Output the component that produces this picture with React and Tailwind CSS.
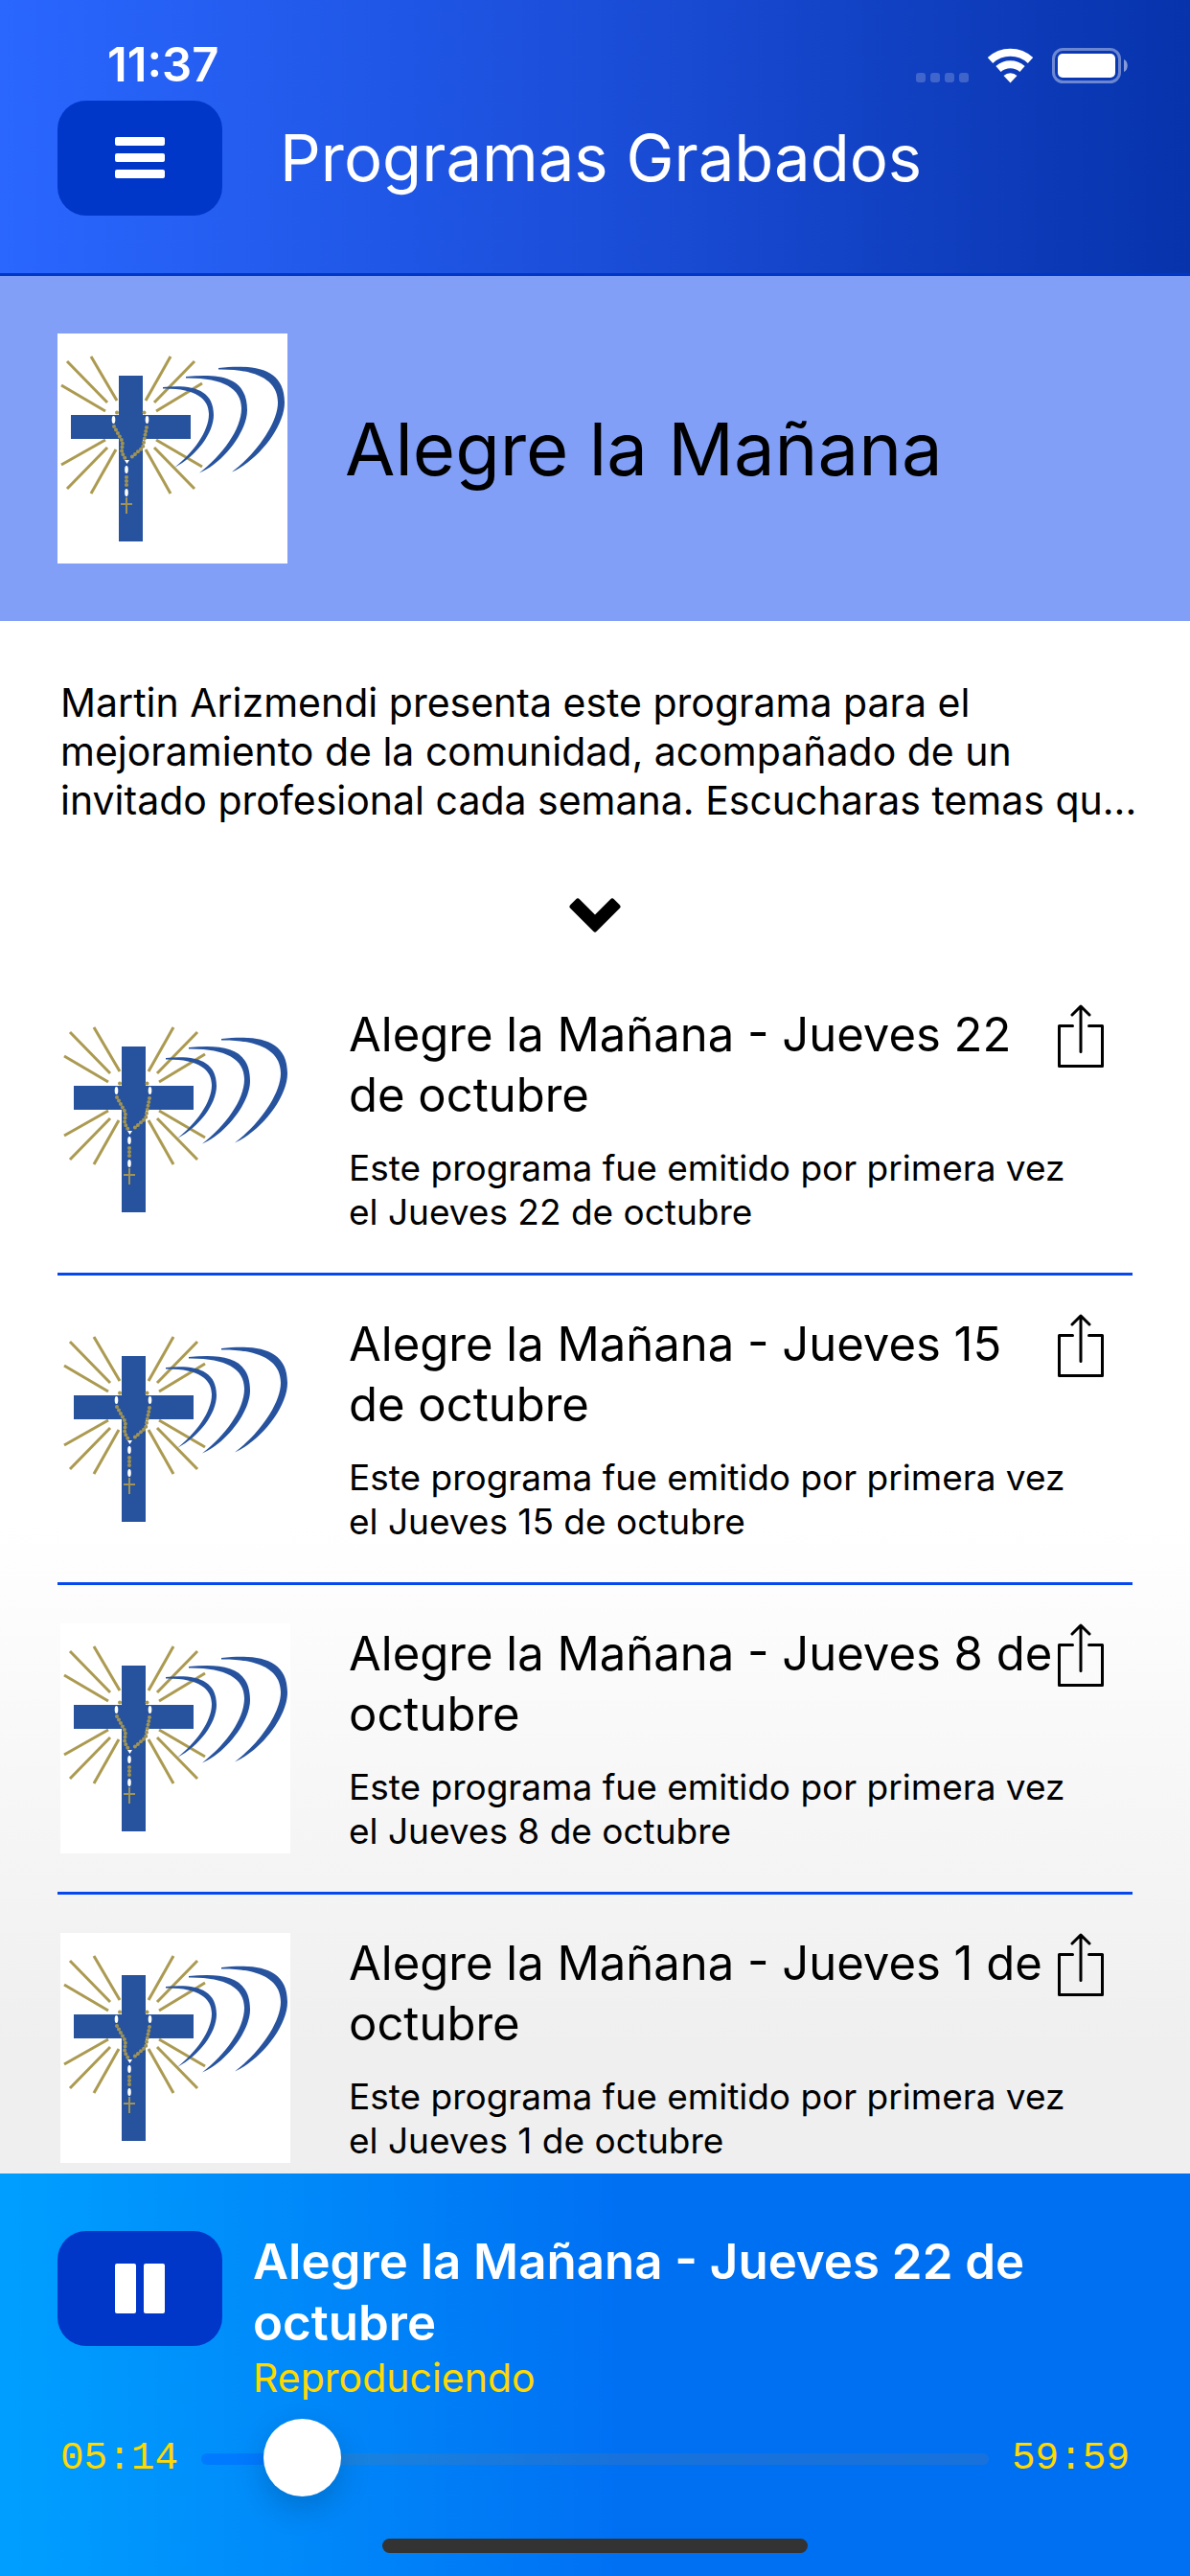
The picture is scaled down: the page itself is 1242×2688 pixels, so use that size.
import React, { useState } from 'react';

const episodes = [
  { id: 1, day: 'Jueves 22 de octubre' },
  { id: 2, day: 'Jueves 15 de octubre' },
  { id: 3, day: 'Jueves 8 de octubre' },
  { id: 4, day: 'Jueves 1 de octubre' },
];

const description =
  'Martin Arizmendi presenta este programa para el mejoramiento de la comunidad, acompañado de un invitado profesional cada semana. Escucharas temas que ayudan a la familia.';
const PREVIEW_LENGTH = 148;
const DURATION = 3599;

// Gold rays around the cross, [x1, y1, x2, y2]
const rays = [
  [35, 24, 62, 70],
  [10, 29, 52, 72],
  [4, 54, 50, 81],
  [118, 24, 92, 70],
  [143, 29, 101, 72],
  [151, 52, 103, 81],
  [50, 111, 4, 137],
  [52, 119, 10, 162],
  [61, 121, 35, 167],
  [103, 111, 151, 139],
  [101, 119, 143, 162],
  [92, 121, 118, 167],
];

function formatTime(seconds) {
  const m = String(Math.floor(seconds / 60)).padStart(2, '0');
  const s = String(seconds % 60).padStart(2, '0');
  return `${m}:${s}`;
}

function ProgramLogo() {
  return (
    <svg viewBox="0 0 240 240" className="size-60 shrink-0 bg-white" role="img" aria-label="Alegre la Mañana">
      <g stroke="#ab9a50" strokeWidth="3">
        {rays.map(([x1, y1, x2, y2]) => (
          <line key={`${x1}-${y1}`} x1={x1} y1={y1} x2={x2} y2={y2} />
        ))}
      </g>
      <path d="M64 44h25v41h50v25H89v107H64V110H14V85h50z" fill="#27539e" />
      <g fill="#27539e">
        <path d="M110 56C140 53 163 58 163 85C163 104 145 128 122 140C142 124 158 102 158 84C158 68 144 57 110 57.500Z" />
        <path d="M134 45C168 42 198 44 198 80C198 103 172 136 148 145.500C172 127 192 100 192 78C192 57 172 46 134 46.500Z" />
        <path d="M168 36C205 32 237 36 237 72C237 97 210 132 182 144.500C208 125 230 93 230 72C230 49 208 37 168 37.500Z" />
      </g>
      <g fill="none" stroke="#a09355" strokeWidth="4" strokeLinecap="round" strokeDasharray="0 4">
        <path d="M59 97L68 113L67 124L71 131" />
        <path d="M93 98L89 119L75 131" />
        <path d="M72 150V160" />
      </g>
      <g fill="#ab9a50">
        <circle cx="62" cy="82.500" r="2" />
        <circle cx="90.500" cy="82.500" r="2" />
      </g>
      <g fill="#fff">
        <ellipse cx="58.500" cy="90" rx="1.800" ry="4" />
        <ellipse cx="93.500" cy="90" rx="1.800" ry="4" />
        <path d="M70 132h5l-2.500 4z" />
        <ellipse cx="72" cy="142" rx="1.800" ry="4" />
        <ellipse cx="72" cy="166" rx="1.800" ry="4" />
      </g>
      <path d="M72 171v17M66 178h12" stroke="#a09355" strokeWidth="2" />
    </svg>
  );
}

function StatusBar() {
  return (
    <div className="flex items-end justify-between pl-28 pr-16 pt-10 text-white">
      <span className="text-[49px] leading-14 font-semibold">11:37</span>
      <svg viewBox="0 0 222 38" className="mb-2 h-[38px] w-[222px]" fill="#fff" aria-hidden="true">
        <g opacity="0.2">
          <rect x="0" y="26" width="10" height="10" rx="3" />
          <rect x="15" y="26" width="10" height="10" rx="3" />
          <rect x="30" y="26" width="10" height="10" rx="3" />
          <rect x="45" y="26" width="10" height="10" rx="3" />
        </g>
        <g fill="none" stroke="#fff" strokeWidth="8">
          <path d="M77.500 13a31 31 0 0 1 42 0" />
          <path d="M86 22a19 19 0 0 1 25 0" />
        </g>
        <path d="M98.500 36.500l-7-7.500a10.500 10.500 0 0 1 14 0z" />
        <rect x="143.500" y="1.500" width="69" height="34" rx="10" fill="none" stroke="#fff" strokeWidth="3" opacity="0.4" />
        <rect x="148" y="6" width="60" height="25" rx="5" />
        <path d="M217 12c5 2 5 11 0 13z" opacity="0.5" />
      </svg>
    </div>
  );
}

function ShareIcon() {
  return (
    <svg viewBox="0 0 48 66" className="h-[66px] w-12" fill="none" stroke="#000" strokeWidth="3" strokeLinecap="round" strokeLinejoin="round" aria-hidden="true">
      <path d="M15.500 22.500H1.500v42h45v-42h-14M24 49.500V2M15 11l9-9 9 9" />
    </svg>
  );
}

function Episode({ day }) {
  return (
    <li className="flex gap-[61px] border-b-3 border-[#0747ee] py-10 pl-[3px]">
      <ProgramLogo />
      <div className="min-w-0 flex-1">
        <div className="flex items-start">
          <h3 className="min-w-0 flex-1 text-[49px] leading-[63px]">{`Alegre la Mañana - ${day}`}</h3>
          <button type="button" aria-label="Compartir" className="mr-[30px] shrink-0">
            <ShareIcon />
          </button>
        </div>
        <p className="pt-[22px] pr-12 text-[37px] leading-[46px]">
          {`Este programa fue emitido por primera vez el ${day}`}
        </p>
      </div>
    </li>
  );
}

function Player() {
  const [playing, setPlaying] = useState(true);
  const [position, setPosition] = useState(314);

  return (
    <footer className="shrink-0 bg-linear-to-r from-[#009fff] to-[#0070f3] to-52% px-15 pt-15 pb-6">
      <div className="flex items-start gap-8">
        <button
          type="button"
          aria-label={playing ? 'Pausar' : 'Reproducir'}
          onClick={() => setPlaying(!playing)}
          className="flex h-30 w-43 shrink-0 items-center justify-center rounded-[30px] bg-[#0037c9]"
        >
          <svg viewBox="0 0 52 52" className="size-13" fill="#fff" aria-hidden="true">
            {playing ? (
              <>
                <rect width="22" height="52" rx="2" />
                <rect x="30" width="22" height="52" rx="2" />
              </>
            ) : (
              <path d="M4 0l46 26L4 52z" />
            )}
          </svg>
        </button>
        <div className="min-w-0 flex-1">
          <h2 className="text-[51px] leading-16 font-semibold text-white">Alegre la Mañana - Jueves 22 de octubre</h2>
          <p className="text-[41px] leading-[50px] text-[#ffd900]">{playing ? 'Reproduciendo' : 'En pausa'}</p>
        </div>
      </div>
      <div className="flex h-[119px] items-center gap-6 px-[3px] font-['Liberation_Mono',monospace] text-[41px] text-[#ffd900]">
        <span>{formatTime(position)}</span>
        <input
          type="range"
          aria-label="Posición"
          min="0"
          max={DURATION}
          value={position}
          onChange={(e) => setPosition(Number(e.target.value))}
          style={{ '--fill': `${(position / DURATION) * 100}%` }}
          className="h-21 min-w-0 flex-1 appearance-none bg-transparent [&::-webkit-slider-runnable-track]:h-3 [&::-webkit-slider-runnable-track]:rounded-full [&::-webkit-slider-runnable-track]:bg-[linear-gradient(to_right,#007aff_var(--fill),#78788033_var(--fill))] [&::-webkit-slider-thumb]:-mt-9 [&::-webkit-slider-thumb]:size-[81px] [&::-webkit-slider-thumb]:appearance-none [&::-webkit-slider-thumb]:rounded-full [&::-webkit-slider-thumb]:bg-white [&::-webkit-slider-thumb]:shadow-[0_12px_32px_rgba(0,0,0,0.18)]"
        />
        <span>{formatTime(DURATION)}</span>
      </div>
      <div className="mx-auto mt-6 h-[15px] w-111 rounded-full bg-[#333]" />
    </footer>
  );
}

export default function App() {
  const [expanded, setExpanded] = useState(false);
  const preview = `${description.slice(0, PREVIEW_LENGTH)}...`;

  return (
    <div className="flex h-screen flex-col overflow-hidden bg-white font-['Inter',sans-serif] text-black">
      <header className="shrink-0 border-b-3 border-[#0037c9] bg-linear-to-r from-[#2a67ff] via-[#1b4ed9] to-[#0733ac] pb-15">
        <StatusBar />
        <div className="flex items-center gap-15 px-15 pt-[9px]">
          <button
            type="button"
            aria-label="Menú"
            className="flex h-30 w-43 shrink-0 items-center justify-center rounded-[30px] bg-[#0037c9]"
          >
            <svg viewBox="0 0 52 44" className="h-11 w-13" fill="#fff" aria-hidden="true">
              <rect width="52" height="9" rx="2" />
              <rect y="17" width="52" height="9" rx="2" />
              <rect y="34" width="52" height="9" rx="2" />
            </svg>
          </button>
          <h1 className="text-[67px] leading-20 text-white">Programas Grabados</h1>
        </div>
      </header>

      <section className="flex shrink-0 items-center gap-15 bg-[#819ff7] p-15">
        <ProgramLogo />
        <h2 className="text-[76px] leading-24">Alegre la Mañana</h2>
      </section>

      <main className="min-h-0 flex-1 overflow-hidden bg-linear-to-b from-white from-58% to-[#efefef] to-92% px-15 pt-15">
        <p className="-mr-3 pl-[3px] text-[41px] leading-[51px]">{expanded ? description : preview}</p>
        <button
          type="button"
          aria-label="Ver más"
          onClick={() => setExpanded(!expanded)}
          className="mx-auto flex h-[147px] w-40 items-center justify-center pt-10"
        >
          <svg viewBox="0 0 54 36" className="h-9 w-[54px]" aria-hidden="true">
            <path d="M3 9l6-6 18 18 18-18 6 6-24 24z" stroke="#000" strokeWidth="5" strokeLinejoin="round" />
          </svg>
        </button>
        <ul>
          {episodes.map((episode) => (
            <Episode key={episode.id} day={episode.day} />
          ))}
        </ul>
      </main>

      <Player />
    </div>
  );
}
